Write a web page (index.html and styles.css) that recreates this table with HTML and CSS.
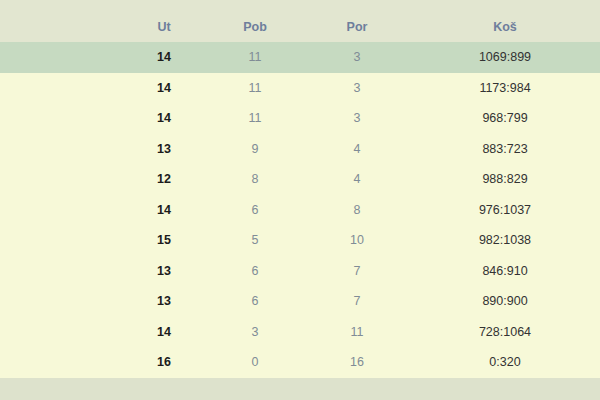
FILE: index.html
```html
<!DOCTYPE html>
<html>
<head>
<meta charset="utf-8">
<link rel="stylesheet" href="styles.css">
</head>
<body>
<div class="table">
  <div class="row head"><span></span><span>Ut</span><span>Pob</span><span>Por</span><span>Koš</span></div>
  <div class="row hl"><span></span><span class="ut">14</span><span class="n">11</span><span class="n">3</span><span class="k">1069:899</span></div>
  <div class="row"><span></span><span class="ut">14</span><span class="n">11</span><span class="n">3</span><span class="k">1173:984</span></div>
  <div class="row"><span></span><span class="ut">14</span><span class="n">11</span><span class="n">3</span><span class="k">968:799</span></div>
  <div class="row"><span></span><span class="ut">13</span><span class="n">9</span><span class="n">4</span><span class="k">883:723</span></div>
  <div class="row"><span></span><span class="ut">12</span><span class="n">8</span><span class="n">4</span><span class="k">988:829</span></div>
  <div class="row"><span></span><span class="ut">14</span><span class="n">6</span><span class="n">8</span><span class="k">976:1037</span></div>
  <div class="row"><span></span><span class="ut">15</span><span class="n">5</span><span class="n">10</span><span class="k">982:1038</span></div>
  <div class="row"><span></span><span class="ut">13</span><span class="n">6</span><span class="n">7</span><span class="k">846:910</span></div>
  <div class="row"><span></span><span class="ut">13</span><span class="n">6</span><span class="n">7</span><span class="k">890:900</span></div>
  <div class="row"><span></span><span class="ut">14</span><span class="n">3</span><span class="n">11</span><span class="k">728:1064</span></div>
  <div class="row"><span></span><span class="ut">16</span><span class="n">0</span><span class="n">16</span><span class="k">0:320</span></div>
  <div class="foot"></div>
</div>
</body>
</html>
```
FILE: styles.css
```css
html, body {
  margin: 0;
  padding: 0;
  background: #dde2cc;
}
body {
  width: 600px;
  height: 400px;
  overflow: hidden;
  font-family: "Liberation Sans", Arial, sans-serif;
  font-size: 12.5px;
}
.table {
  display: flex;
  flex-direction: column;
}
.row {
  display: grid;
  grid-template-columns: 120px 88px 94px 110px 186px;
  height: 30.5px;
  align-items: center;
  background: #f7f9d8;
  text-align: center;
}
.row.head {
  height: 42px;
  background: #e2e6d0;
  color: #6e7e9c;
  font-weight: bold;
  font-size: 12.5px;
  align-items: end;
  box-sizing: border-box;
}
.row.head span {
  padding-bottom: 8px;
}
.row.hl {
  background: #c6dac1;
}
.ut {
  font-weight: bold;
  color: #1c1c1c;
}
.n {
  color: #808c96;
}
.k {
  color: #333333;
}
.foot {
  height: 24px;
  background: #dde2cc;
}
```
